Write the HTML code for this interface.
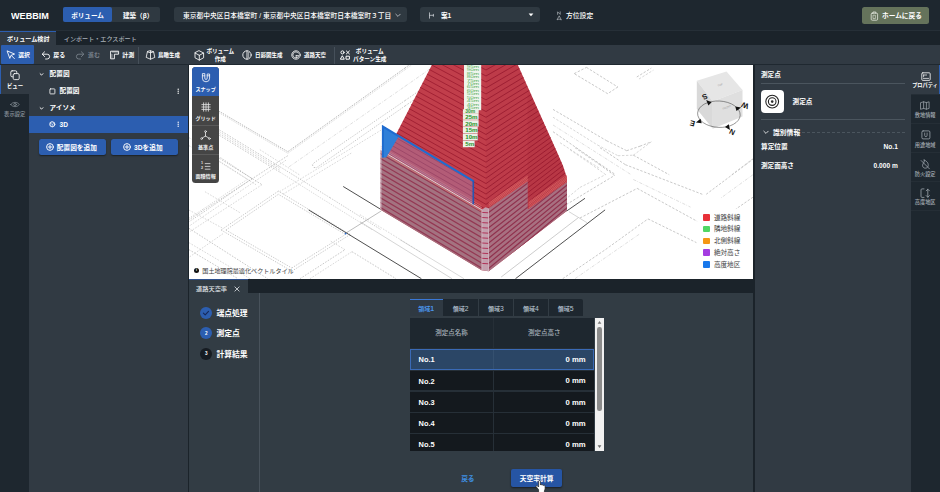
<!DOCTYPE html>
<html lang="ja">
<head>
<meta charset="utf-8">
<title>WEBBIM</title>
<style>
*{box-sizing:border-box;margin:0;padding:0}
html,body{width:940px;height:492px;overflow:hidden;background:#313a43;font-family:"Liberation Sans","Noto Sans CJK JP",sans-serif;color:#fff;font-size:7px}
.abs{position:absolute}
#app{position:relative;width:940px;height:492px;overflow:hidden}
.t{position:absolute;white-space:nowrap;font-weight:700}
.r{position:absolute}
</style>
</head>
<body>
<div id="app">
<div class="r" style="left:0;top:0;width:940px;height:31px;background:#1e272f"></div>
<div class="r" style="left:0;top:30px;width:940px;height:1px;background:#262f37"></div>
<div class="t" style="left:11.3px;top:8.6px;font-size:9.8px;line-height:14px;transform:scaleX(.93);transform-origin:0 0">WEBBIM</div>
<div class="r" style="left:62.5px;top:7px;width:97.5px;height:14.7px;border-radius:2px;background:#2f3941"></div>
<div class="r" style="left:62.5px;top:7px;width:49.2px;height:14.7px;border-radius:2px;background:#2c5eb0"></div>
<div class="t" style="left:71.2px;top:10.75px;font-size:6.6px;line-height:9.899999999999999px;font-weight:700;color:#fff;">ボリューム</div>
<div class="t" style="left:122.9px;top:10.75px;font-size:6.6px;line-height:9.899999999999999px;font-weight:700;color:#fff;">建築（β）</div>
<div class="r" style="left:174px;top:7px;width:232.5px;height:14.7px;border-radius:3px;background:#2f3941"></div>
<div class="t" style="left:183px;top:10.64px;font-size:6.75px;line-height:10.125px;font-weight:500;color:#fff;">東京都中央区日本橋室町 / 東京都中央区日本橋室町日本橋室町３丁目</div>
<svg class="abs" style="left:394.5px;top:12.5px;" width="6" height="5" viewBox="0 0 6 5" fill="none" stroke="#fff" stroke-width="1" stroke-linecap="round" stroke-linejoin="round"><path d="M0.8 1.2 L3 3.4 L5.2 1.2" stroke="#c9ced3" stroke-width="0.8"/></svg>
<div class="r" style="left:420px;top:7px;width:119.5px;height:14.7px;border-radius:3px;background:#2f3941"></div>
<svg class="abs" style="left:428px;top:11.5px;" width="7" height="7" viewBox="0 0 7 7" fill="none" stroke="#fff" stroke-width="1" stroke-linecap="round" stroke-linejoin="round"><path d="M1.5 0.8 V6.2 M1.5 3.3 H5.4 M5.4 2.3 V4.3" stroke="#c9ced3" stroke-width="0.8"/></svg>
<div class="t" style="left:441px;top:10.75px;font-size:6.6px;line-height:9.899999999999999px;font-weight:700;color:#fff;">案1</div>
<svg class="abs" style="left:527.5px;top:13px;" width="6" height="4" viewBox="0 0 6 4" fill="none" stroke="#fff" stroke-width="1" stroke-linecap="round" stroke-linejoin="round"><path d="M0.6 0.6 L5.4 0.6 L3 3.2 Z" fill="#fff" stroke="none"/></svg>
<svg class="abs" style="left:555.5px;top:10.5px;" width="6" height="10" viewBox="0 0 6 10" fill="none" stroke="#fff" stroke-width="1" stroke-linecap="round" stroke-linejoin="round"><path d="M1.6 3.4 V0.8 L4.2 3.4 V0.8" stroke="#c9ced3" stroke-width="0.6"/><path d="M3 5.2 L1 8.8 L3 8 L5 8.8 Z" stroke="#c9ced3" stroke-width="0.6"/></svg>
<div class="t" style="left:566px;top:10.60px;font-size:6.8px;line-height:10.2px;font-weight:500;color:#fff;">方位設定</div>
<div class="r" style="left:862px;top:7px;width:67px;height:16.5px;border-radius:2.5px;background:#65735b"></div>
<svg class="abs" style="left:870px;top:10.5px;" width="9" height="10" viewBox="0 0 9 10" fill="none" stroke="#fff" stroke-width="1" stroke-linecap="round" stroke-linejoin="round"><rect x="1.2" y="2.2" width="6.4" height="7" rx="1" stroke="#e6eadf" stroke-width="0.8"/><path d="M3 2.2 V1 H5.8 V2.2" stroke="#e6eadf" stroke-width="0.8"/><path d="M3.4 4.2 H5.4 V7.6 H3.4 Z" stroke="#e6eadf" stroke-width="0.6"/></svg>
<div class="t" style="left:882px;top:10.58px;font-size:6.7px;line-height:10.05px;font-weight:700;color:#fff;">ホームに戻る</div>
<div class="r" style="left:0;top:31px;width:940px;height:14px;background:#1b232a"></div>
<div class="r" style="left:0;top:31px;width:56px;height:14px;background:#313a43;border-top:1px solid #2c5eb0"></div>
<div class="t" style="left:7px;top:34.42px;font-size:6.1px;line-height:9.149999999999999px;font-weight:700;color:#fff;">ボリューム検討</div>
<div class="t" style="left:63.8px;top:34.42px;font-size:6.1px;line-height:9.149999999999999px;font-weight:500;color:#aab2b9;">インポート・エクスポート</div>
<div class="r" style="left:0;top:45px;width:940px;height:20px;background:#313a43"></div>
<div class="r" style="left:0;top:63.9px;width:940px;height:1.4px;background:#1f2830"></div>
<div class="r" style="left:0.8px;top:45.2px;width:33.6px;height:19.2px;border-radius:1px;background:#2c5eb0"></div>
<div class="r" style="left:138px;top:46.5px;width:1px;height:17px;background:#46505a"></div>
<div class="r" style="left:334px;top:46.5px;width:1px;height:17px;background:#46505a"></div>
<svg class="abs" style="left:5.5px;top:50px;" width="10" height="10" viewBox="0 0 10 10" fill="none" stroke="#fff" stroke-width="1" stroke-linecap="round" stroke-linejoin="round"><path d="M1.2 1.2 L3.8 8.4 L5 5.4 L8.2 4.2 Z" stroke-width="0.9"/><path d="M5.6 5.8 L8.4 8.6" stroke-width="0.9"/></svg>
<div class="t" style="left:18.2px;top:51.15px;font-size:5.8px;line-height:8.7px;font-weight:700;color:#fff;">選択</div>
<svg class="abs" style="left:40.5px;top:50px;" width="10" height="10" viewBox="0 0 10 10" fill="none" stroke="#fff" stroke-width="1" stroke-linecap="round" stroke-linejoin="round"><path d="M3.6 1.8 L1.2 4.2 L3.6 6.6" stroke-width="0.9"/><path d="M1.4 4.2 H6.2 A2.4 2.4 0 0 1 6.2 9 H4.6" stroke-width="0.9"/></svg>
<div class="t" style="left:53.2px;top:51.00px;font-size:6px;line-height:9.0px;font-weight:700;color:#fff;">戻る</div>
<svg class="abs" style="left:75px;top:50px;" width="10" height="10" viewBox="0 0 10 10" fill="none" stroke="#fff" stroke-width="1" stroke-linecap="round" stroke-linejoin="round"><path d="M6.4 1.8 L8.8 4.2 L6.4 6.6" stroke-width="0.9" stroke="#78818a"/><path d="M8.6 4.2 H3.8 A2.4 2.4 0 0 0 3.8 9 H5.4" stroke-width="0.9" stroke="#78818a"/></svg>
<div class="t" style="left:88px;top:51.00px;font-size:6px;line-height:9.0px;font-weight:700;color:#78818a;">進む</div>
<svg class="abs" style="left:109.5px;top:50px;" width="10" height="10" viewBox="0 0 10 10" fill="none" stroke="#fff" stroke-width="1" stroke-linecap="round" stroke-linejoin="round"><path d="M1 1.2 H8.6 V4.2 H4.4 V8.8 H1 Z" stroke-width="0.9"/><path d="M3 1.4 V2.6 M5 1.4 V2.6 M7 1.4 V2.6 M1.2 5 H2.4 M1.2 7 H2.4" stroke-width="0.6"/></svg>
<div class="t" style="left:122.2px;top:51.00px;font-size:6px;line-height:9.0px;font-weight:700;color:#fff;">計測</div>
<svg class="abs" style="left:144.5px;top:50px;" width="11" height="10" viewBox="0 0 11 10" fill="none" stroke="#fff" stroke-width="1" stroke-linecap="round" stroke-linejoin="round"><path d="M5.5 0.8 L8.6 1.8 L9.8 7.4 L5.5 9.2 L1.2 7.4 L2.4 1.8 Z M5.5 0.8 V9.2 M2.4 1.8 L5.5 2.8 L8.6 1.8" stroke-width="0.8"/></svg>
<div class="t" style="left:158px;top:51.38px;font-size:5.5px;line-height:8.25px;font-weight:700;color:#fff;">鳥瞰生成</div>
<svg class="abs" style="left:193.5px;top:50px;" width="11" height="11" viewBox="0 0 11 11" fill="none" stroke="#fff" stroke-width="1" stroke-linecap="round" stroke-linejoin="round"><path d="M5.3 0.8 L9.6 3 V7.8 L5.3 10.1 L1 7.8 V3 Z M1 3 L5.3 5.3 L9.6 3 M5.3 5.3 V10.1" stroke-width="0.85"/></svg>
<div class="t" style="left:220.3px;transform:translateX(-50%);top:47.40px;font-size:5.6px;line-height:8.399999999999999px;font-weight:700;color:#fff;">ボリューム</div>
<div class="t" style="left:220.3px;transform:translateX(-50%);top:55.00px;font-size:5.6px;line-height:8.399999999999999px;font-weight:700;color:#fff;">作成</div>
<svg class="abs" style="left:242.3px;top:50.2px;" width="10" height="10" viewBox="0 0 10 10" fill="none" stroke="#fff" stroke-width="1" stroke-linecap="round" stroke-linejoin="round"><circle cx="5" cy="5" r="4.2" stroke-width="0.85"/><path d="M5 0.8 V9.2" stroke-width="0.85"/><path d="M6.6 2.6 V3.4 M6.6 4.6 V5.4 M6.6 6.6 V7.4" stroke-width="0.7"/></svg>
<div class="t" style="left:255px;top:51.38px;font-size:5.5px;line-height:8.25px;font-weight:700;color:#fff;">日影図生成</div>
<svg class="abs" style="left:291px;top:50.2px;" width="10" height="10" viewBox="0 0 10 10" fill="none" stroke="#fff" stroke-width="1" stroke-linecap="round" stroke-linejoin="round"><circle cx="5" cy="5" r="4.2" stroke-width="0.85"/><path d="M7.4 3.2 A3 3 0 1 0 7.8 5.6 H5.2 M5.2 5.6 V8" stroke-width="0.75"/></svg>
<div class="t" style="left:304px;top:51.38px;font-size:5.5px;line-height:8.25px;font-weight:700;color:#fff;">道路天空</div>
<svg class="abs" style="left:340.3px;top:50.4px;" width="11" height="10.5" viewBox="0 0 11 10.5" fill="none" stroke="#fff" stroke-width="1" stroke-linecap="round" stroke-linejoin="round"><circle cx="2.5" cy="2.4" r="1.55" stroke-width="1"/><path d="M6.4 1 L9.4 3.9 M9.4 1 L6.4 3.9" stroke-width="1"/><path d="M2.5 6.1 L4.3 9.2 H0.7 Z" stroke-width="1"/><rect x="6.4" y="6.2" width="3" height="3" stroke-width="1"/></svg>
<div class="t" style="left:369.7px;transform:translateX(-50%);top:47.40px;font-size:5.6px;line-height:8.399999999999999px;font-weight:700;color:#fff;">ボリューム</div>
<div class="t" style="left:369.7px;transform:translateX(-50%);top:55.00px;font-size:5.6px;line-height:8.399999999999999px;font-weight:700;color:#fff;">パターン生成</div>
<div class="r" style="left:0;top:65px;width:28.5px;height:427px;background:#1e272f"></div>
<div class="r" style="left:0;top:65px;width:28.5px;height:29px;background:#313a43;border-left:1.6px solid #2c5eb0"></div>
<svg class="abs" style="left:10px;top:70px;" width="10" height="11" viewBox="0 0 10 11" fill="none" stroke="#fff" stroke-width="1" stroke-linecap="round" stroke-linejoin="round"><rect x="0.8" y="0.8" width="6" height="6" rx="1.3" stroke-width="0.85"/><rect x="3.2" y="3.6" width="6" height="6" rx="1.3" stroke-width="0.85" fill="#313a43"/></svg>
<div class="t" style="left:15px;transform:translateX(-50%);top:81.85px;font-size:5.4px;line-height:8.100000000000001px;font-weight:700;color:#fff;">ビュー</div>
<svg class="abs" style="left:10px;top:101.3px;" width="10" height="7" viewBox="0 0 10 7" fill="none" stroke="#fff" stroke-width="1" stroke-linecap="round" stroke-linejoin="round"><path d="M0.8 3.5 C2.4 0.6 7.6 0.6 9.2 3.5 C7.6 6.4 2.4 6.4 0.8 3.5 Z" stroke="#8a939b" stroke-width="0.7"/><circle cx="5" cy="3.5" r="1.3" stroke="#8a939b" stroke-width="0.7"/></svg>
<div class="t" style="left:14.7px;transform:translateX(-50%);top:111.12px;font-size:5.3px;line-height:7.949999999999999px;font-weight:500;color:#8a939b;">表示設定</div>
<div class="r" style="left:28.5px;top:65px;width:160.5px;height:427px;background:#313a43"></div>
<svg class="abs" style="left:38.8px;top:71.5px;" width="5" height="5" viewBox="0 0 5 5" fill="none" stroke="#fff" stroke-width="1" stroke-linecap="round" stroke-linejoin="round"><path d="M1.1 1.7 L2.5 3.1 L3.9 1.7" stroke-width="0.95"/></svg>
<div class="t" style="left:49.6px;top:69.07px;font-size:6.7px;line-height:10.05px;font-weight:700;color:#fff;">配置図</div>
<svg class="abs" style="left:48.5px;top:87.5px;" width="7" height="7" viewBox="0 0 7 7" fill="none" stroke="#fff" stroke-width="1" stroke-linecap="round" stroke-linejoin="round"><rect x="0.9" y="0.9" width="5" height="5" rx="0.6" stroke-width="0.8"/></svg>
<div class="t" style="left:59.5px;top:86.07px;font-size:6.7px;line-height:10.05px;font-weight:700;color:#fff;">配置図</div>
<svg class="abs" style="left:38.8px;top:105.5px;" width="5" height="5" viewBox="0 0 5 5" fill="none" stroke="#fff" stroke-width="1" stroke-linecap="round" stroke-linejoin="round"><path d="M1.1 1.7 L2.5 3.1 L3.9 1.7" stroke-width="0.95"/></svg>
<div class="t" style="left:49.6px;top:103.15px;font-size:6.6px;line-height:9.899999999999999px;font-weight:700;color:#fff;">アイソメ</div>
<div class="r" style="left:28.5px;top:116px;width:160.5px;height:16.6px;background:#2c5eb0"></div>
<svg class="abs" style="left:48.6px;top:121.3px;" width="7" height="7" viewBox="0 0 7 7" fill="none" stroke="#fff" stroke-width="1" stroke-linecap="round" stroke-linejoin="round"><circle cx="3.3" cy="3.3" r="2.6" stroke-width="0.7"/><path d="M3.3 0.9 L5.4 2.1 V4.5 L3.3 5.7 L1.2 4.5 V2.1 Z M1.2 2.1 L3.3 3.3 L5.4 2.1 M3.3 3.3 V5.7" stroke-width="0.5"/></svg>
<div class="t" style="left:59.6px;top:119.95px;font-size:6.6px;line-height:9.899999999999999px;font-weight:700;color:#fff;">3D</div>
<div class="r" style="left:39px;top:139.2px;width:67px;height:16.2px;background:#2c5eb0;border-radius:2.5px;box-shadow:0 1px 1.5px rgba(0,0,0,.45)"></div>
<svg class="abs" style="left:45.7px;top:143.3px;" width="8" height="8" viewBox="0 0 8 8" fill="none" stroke="#fff" stroke-width="1" stroke-linecap="round" stroke-linejoin="round"><circle cx="4" cy="4" r="3.4" stroke-width="0.95"/><path d="M4 2.2 V5.8 M2.2 4 H5.8" stroke-width="0.95"/></svg>
<div class="t" style="left:56.8px;top:143.18px;font-size:6.7px;line-height:10.05px;font-weight:700;color:#fff;">配置図を追加</div>
<div class="r" style="left:111px;top:139.2px;width:67px;height:16.2px;background:#2c5eb0;border-radius:2.5px;box-shadow:0 1px 1.5px rgba(0,0,0,.45)"></div>
<svg class="abs" style="left:122.9px;top:143.3px;" width="8" height="8" viewBox="0 0 8 8" fill="none" stroke="#fff" stroke-width="1" stroke-linecap="round" stroke-linejoin="round"><circle cx="4" cy="4" r="3.4" stroke-width="0.95"/><path d="M4 2.2 V5.8 M2.2 4 H5.8" stroke-width="0.95"/></svg>
<div class="t" style="left:134px;top:143.18px;font-size:6.7px;line-height:10.05px;font-weight:700;color:#fff;">3Dを追加</div>
<svg class="abs" style="left:177.3px;top:87.6px;" width="2.4" height="6.4" viewBox="0 0 2.4 6.4" fill="none" stroke="#fff" stroke-width="1" stroke-linecap="round" stroke-linejoin="round"><circle cx="1.2" cy="1.2" r="0.7" fill="#fff" stroke="none"/><circle cx="1.2" cy="3.2" r="0.7" fill="#fff" stroke="none"/><circle cx="1.2" cy="5.2" r="0.7" fill="#fff" stroke="none"/></svg>
<svg class="abs" style="left:177.3px;top:121.2px;" width="2.4" height="6.4" viewBox="0 0 2.4 6.4" fill="none" stroke="#fff" stroke-width="1" stroke-linecap="round" stroke-linejoin="round"><circle cx="1.2" cy="1.2" r="0.7" fill="#fff" stroke="none"/><circle cx="1.2" cy="3.2" r="0.7" fill="#fff" stroke="none"/><circle cx="1.2" cy="5.2" r="0.7" fill="#fff" stroke="none"/></svg>
<div class="r" style="left:189px;top:65.3px;width:564.2px;height:213.8px;background:#fff"></div>
<svg class="abs" style="left:189px;top:65.3px" width="564.2" height="213.8" viewBox="189 65.3 564.2 213.8" font-family="'Liberation Sans','Noto Sans CJK JP',sans-serif"><line x1="219.3" y1="111.7" x2="287.8" y2="152" stroke="#8c8c8c" stroke-width="0.7" stroke-dasharray="1.1 1.1"/><line x1="287.8" y1="152" x2="405" y2="68.3" stroke="#8c8c8c" stroke-width="0.7" stroke-dasharray="1.1 1.1"/><line x1="405" y1="68.3" x2="410" y2="64.7" stroke="#8c8c8c" stroke-width="0.7" stroke-dasharray="1.1 1.1"/><line x1="219.3" y1="113.2" x2="287.8" y2="153.6" stroke="#bebebe" stroke-width="0.6" stroke-dasharray="1.1 1.1"/><line x1="287.8" y1="153.6" x2="405" y2="70" stroke="#bebebe" stroke-width="0.6" stroke-dasharray="1.1 1.1"/><line x1="405" y1="70" x2="412" y2="65" stroke="#bebebe" stroke-width="0.6" stroke-dasharray="1.1 1.1"/><line x1="288.9" y1="167.2" x2="405" y2="86.7" stroke="#bebebe" stroke-width="0.5" stroke-dasharray="3.2 1.4 0.8 1.4"/><line x1="405" y1="86.7" x2="436" y2="65" stroke="#bebebe" stroke-width="0.5" stroke-dasharray="3.2 1.4 0.8 1.4"/><line x1="405" y1="100.9" x2="314.5" y2="162.8" stroke="#a2a2a2" stroke-width="0.6" stroke-dasharray="1.3 1.3"/><line x1="314.5" y1="162.8" x2="312.3" y2="165.2" stroke="#a2a2a2" stroke-width="0.6" stroke-dasharray="1.3 1.3"/><line x1="312.3" y1="165.2" x2="314" y2="167.8" stroke="#a2a2a2" stroke-width="0.6" stroke-dasharray="1.3 1.3"/><line x1="314" y1="167.8" x2="316.5" y2="168" stroke="#a2a2a2" stroke-width="0.6" stroke-dasharray="1.3 1.3"/><line x1="316.5" y1="168" x2="405" y2="106.3" stroke="#a2a2a2" stroke-width="0.6" stroke-dasharray="1.3 1.3"/><line x1="405" y1="100.9" x2="420" y2="90.5" stroke="#a2a2a2" stroke-width="0.6" stroke-dasharray="1.6 1.4"/><line x1="405" y1="106.3" x2="415" y2="99.4" stroke="#a2a2a2" stroke-width="0.6" stroke-dasharray="1.6 1.4"/><line x1="219.3" y1="130.2" x2="280.2" y2="167.2" stroke="#a2a2a2" stroke-width="0.6" stroke-dasharray="1.6 1.4"/><line x1="219.3" y1="132.0" x2="280.2" y2="169.0" stroke="#bebebe" stroke-width="0.6" stroke-dasharray="1.6 1.4"/><line x1="219.3" y1="133.79999999999998" x2="280.2" y2="170.79999999999998" stroke="#bebebe" stroke-width="0.6" stroke-dasharray="1.6 1.4"/><line x1="219.3" y1="135.6" x2="280.2" y2="172.6" stroke="#a2a2a2" stroke-width="0.6" stroke-dasharray="1.6 1.4"/><line x1="219.3" y1="158.5" x2="262" y2="185" stroke="#a2a2a2" stroke-width="0.6" stroke-dasharray="1.6 1.4"/><line x1="219.3" y1="162" x2="256" y2="185" stroke="#bebebe" stroke-width="0.6" stroke-dasharray="1.6 1.4"/><line x1="280.2" y1="167.2" x2="330" y2="198" stroke="#a2a2a2" stroke-width="0.6" stroke-dasharray="1.3 1.3"/><line x1="330" y1="198" x2="381" y2="230" stroke="#a2a2a2" stroke-width="0.6" stroke-dasharray="1.3 1.3"/><line x1="280.2" y1="172.6" x2="322" y2="199" stroke="#bebebe" stroke-width="0.6" stroke-dasharray="1.3 1.3"/><line x1="322" y1="199" x2="372" y2="230" stroke="#bebebe" stroke-width="0.6" stroke-dasharray="1.3 1.3"/><line x1="287.8" y1="156" x2="189" y2="220" stroke="#a2a2a2" stroke-width="0.6" stroke-dasharray="1.6 1.4"/><line x1="286" y1="160.5" x2="189" y2="226.5" stroke="#bebebe" stroke-width="0.6" stroke-dasharray="1.6 1.4"/><line x1="262" y1="185" x2="189" y2="232.5" stroke="#bebebe" stroke-width="0.6" stroke-dasharray="1.6 1.4"/><line x1="278.4" y1="194.6" x2="225.9" y2="230.3" stroke="#a2a2a2" stroke-width="0.6" stroke-dasharray="1.3 1.3"/><line x1="225.9" y1="230.3" x2="291.8" y2="268.3" stroke="#a2a2a2" stroke-width="0.6" stroke-dasharray="1.3 1.3"/><line x1="291.8" y1="268.3" x2="345.4" y2="234.8" stroke="#a2a2a2" stroke-width="0.6" stroke-dasharray="1.3 1.3"/><line x1="345.4" y1="234.8" x2="278.4" y2="194.6" stroke="#a2a2a2" stroke-width="0.6" stroke-dasharray="1.3 1.3"/><line x1="278.4" y1="191.4" x2="221.1" y2="230.3" stroke="#a2a2a2" stroke-width="0.6" stroke-dasharray="1.3 1.3"/><line x1="221.1" y1="230.3" x2="291.8" y2="271.5" stroke="#a2a2a2" stroke-width="0.6" stroke-dasharray="1.3 1.3"/><line x1="291.8" y1="271.5" x2="350.2" y2="234.8" stroke="#a2a2a2" stroke-width="0.6" stroke-dasharray="1.3 1.3"/><line x1="350.2" y1="234.8" x2="278.4" y2="191.4" stroke="#a2a2a2" stroke-width="0.6" stroke-dasharray="1.3 1.3"/><line x1="189" y1="138" x2="219" y2="155" stroke="#bebebe" stroke-width="0.6" stroke-dasharray="1.6 1.4"/><line x1="189" y1="146" x2="219" y2="163" stroke="#bebebe" stroke-width="0.6" stroke-dasharray="1.6 1.4"/><line x1="189" y1="250" x2="238" y2="279" stroke="#a2a2a2" stroke-width="0.6" stroke-dasharray="1.6 1.4"/><line x1="189" y1="243" x2="250" y2="279" stroke="#bebebe" stroke-width="0.6" stroke-dasharray="1.6 1.4"/><line x1="205" y1="192" x2="240" y2="213" stroke="#bebebe" stroke-width="0.6" stroke-dasharray="1.6 1.4"/><line x1="300" y1="279" x2="345" y2="250" stroke="#a2a2a2" stroke-width="0.6" stroke-dasharray="1.6 1.4"/><line x1="310" y1="279" x2="352" y2="252" stroke="#bebebe" stroke-width="0.6" stroke-dasharray="1.6 1.4"/><line x1="352" y1="252" x2="396" y2="279" stroke="#a2a2a2" stroke-width="0.6" stroke-dasharray="1.6 1.4"/><line x1="345" y1="250" x2="330" y2="241" stroke="#bebebe" stroke-width="0.6" stroke-dasharray="1.6 1.4"/><line x1="360" y1="215" x2="420" y2="252" stroke="#bebebe" stroke-width="0.6" stroke-dasharray="1.6 1.4"/><line x1="574.2" y1="73.9" x2="586.5" y2="67.7" stroke="#a2a2a2" stroke-width="0.6" stroke-dasharray="2.4 1.6"/><line x1="586.5" y1="67.7" x2="617.8" y2="87.3" stroke="#a2a2a2" stroke-width="0.6" stroke-dasharray="2.4 1.6"/><line x1="617.8" y1="87.3" x2="607.7" y2="94" stroke="#a2a2a2" stroke-width="0.6" stroke-dasharray="2.4 1.6"/><line x1="607.7" y1="94" x2="574.2" y2="73.9" stroke="#a2a2a2" stroke-width="0.6" stroke-dasharray="2.4 1.6"/><line x1="636.8" y1="77.3" x2="651.3" y2="68.4" stroke="#a2a2a2" stroke-width="0.6" stroke-dasharray="2.4 1.6"/><line x1="639" y1="79.3" x2="653.5" y2="70.4" stroke="#bebebe" stroke-width="0.6" stroke-dasharray="2.4 1.6"/><line x1="553" y1="109.7" x2="606.6" y2="141" stroke="#a2a2a2" stroke-width="0.6" stroke-dasharray="2.4 1.6"/><line x1="606.6" y1="141" x2="626.7" y2="151" stroke="#a2a2a2" stroke-width="0.6" stroke-dasharray="2.4 1.6"/><line x1="626.7" y1="151" x2="640" y2="146.5" stroke="#a2a2a2" stroke-width="0.6" stroke-dasharray="2.4 1.6"/><line x1="640" y1="146.5" x2="651.3" y2="142.1" stroke="#a2a2a2" stroke-width="0.6" stroke-dasharray="2.4 1.6"/><line x1="553" y1="117.5" x2="597.7" y2="145.4" stroke="#bebebe" stroke-width="0.6" stroke-dasharray="2.4 1.6"/><line x1="597.7" y1="145.4" x2="618" y2="156" stroke="#bebebe" stroke-width="0.6" stroke-dasharray="2.4 1.6"/><line x1="618" y1="156" x2="633.4" y2="155.5" stroke="#bebebe" stroke-width="0.6" stroke-dasharray="2.4 1.6"/><line x1="633.4" y1="155.5" x2="651.3" y2="142.1" stroke="#bebebe" stroke-width="0.6" stroke-dasharray="2.4 1.6"/><line x1="633.4" y1="155.5" x2="669.2" y2="175" stroke="#a2a2a2" stroke-width="0.6" stroke-dasharray="2.4 1.6"/><line x1="553" y1="125.3" x2="631.2" y2="175" stroke="#bebebe" stroke-width="0.5" stroke-dasharray="3.2 1.4 0.8 1.4"/><line x1="553" y1="132" x2="615.6" y2="175" stroke="#a2a2a2" stroke-width="0.6" stroke-dasharray="2.4 1.6"/><line x1="560" y1="143" x2="600" y2="169" stroke="#bebebe" stroke-width="0.6" stroke-dasharray="2.4 1.6"/><line x1="566.4" y1="204.8" x2="580" y2="196.6" stroke="#a2a2a2" stroke-width="0.6" stroke-dasharray="2.4 1.6"/><line x1="580" y1="196.6" x2="614.5" y2="175.8" stroke="#a2a2a2" stroke-width="0.6" stroke-dasharray="2.4 1.6"/><line x1="614.5" y1="175.8" x2="599.7" y2="165" stroke="#a2a2a2" stroke-width="0.6" stroke-dasharray="2.4 1.6"/><line x1="599.7" y1="165" x2="575" y2="148" stroke="#a2a2a2" stroke-width="0.6" stroke-dasharray="2.4 1.6"/><line x1="562" y1="202.5" x2="580" y2="187.7" stroke="#bebebe" stroke-width="0.6" stroke-dasharray="2.4 1.6"/><line x1="580" y1="187.7" x2="605.6" y2="174.9" stroke="#bebebe" stroke-width="0.6" stroke-dasharray="2.4 1.6"/><line x1="605.6" y1="174.9" x2="591.8" y2="165" stroke="#bebebe" stroke-width="0.6" stroke-dasharray="2.4 1.6"/><line x1="591.8" y1="165" x2="570" y2="150" stroke="#bebebe" stroke-width="0.6" stroke-dasharray="2.4 1.6"/><line x1="625.4" y1="165" x2="702.3" y2="194.6" stroke="#a2a2a2" stroke-width="0.6" stroke-dasharray="2.4 1.6"/><line x1="706.2" y1="194.6" x2="745.7" y2="165" stroke="#a2a2a2" stroke-width="0.6" stroke-dasharray="2.4 1.6"/><line x1="745.7" y1="165" x2="753" y2="159.5" stroke="#a2a2a2" stroke-width="0.6" stroke-dasharray="2.4 1.6"/><line x1="600" y1="148" x2="625.4" y2="165" stroke="#a2a2a2" stroke-width="0.6" stroke-dasharray="2.4 1.6"/><line x1="633.3" y1="179.8" x2="690.5" y2="207.4" stroke="#bebebe" stroke-width="0.5" stroke-dasharray="3.2 1.4 0.8 1.4"/><line x1="580" y1="218.3" x2="637.2" y2="188.7" stroke="#a2a2a2" stroke-width="0.6" stroke-dasharray="2.4 1.6"/><line x1="637.2" y1="188.7" x2="698.3" y2="222.2" stroke="#a2a2a2" stroke-width="0.6" stroke-dasharray="2.4 1.6"/><line x1="562.7" y1="279" x2="605.6" y2="249.8" stroke="#a2a2a2" stroke-width="0.6" stroke-dasharray="2.4 1.6"/><line x1="605.6" y1="249.8" x2="648" y2="219.2" stroke="#a2a2a2" stroke-width="0.6" stroke-dasharray="2.4 1.6"/><line x1="648" y1="219.2" x2="696.4" y2="242.9" stroke="#a2a2a2" stroke-width="0.6" stroke-dasharray="2.4 1.6"/><line x1="753" y1="197.5" x2="735.8" y2="209.4" stroke="#a2a2a2" stroke-width="0.6" stroke-dasharray="2.4 1.6"/><line x1="753" y1="175" x2="720" y2="199" stroke="#bebebe" stroke-width="0.5" stroke-dasharray="3.2 1.4 0.8 1.4"/><line x1="731.8" y1="175" x2="753" y2="158.9" stroke="#bebebe" stroke-width="0.6" stroke-dasharray="2.4 1.6"/><line x1="575" y1="279" x2="640" y2="234" stroke="#bebebe" stroke-width="0.5" stroke-dasharray="3.2 1.4 0.8 1.4"/><line x1="501.2" y1="277.3" x2="578.3" y2="218" stroke="#9a9a9a" stroke-width="0.5"/><line x1="569" y1="212" x2="587" y2="223" stroke="#aaaaaa" stroke-width="0.5"/><line x1="345.4" y1="233.7" x2="381.2" y2="211.3" stroke="#777" stroke-width="0.5"/><line x1="360" y1="222" x2="452" y2="279" stroke="#aaaaaa" stroke-width="0.5"/><line x1="400" y1="240" x2="464" y2="279" stroke="#b5b5b5" stroke-width="0.5"/><line x1="308.6" y1="210.2" x2="421.4" y2="279" stroke="#222" stroke-width="0.8"/><line x1="343.2" y1="186.8" x2="381" y2="209.8" stroke="#222" stroke-width="0.8"/><line x1="566.7" y1="211.3" x2="585" y2="198.6" stroke="#222" stroke-width="0.8"/><line x1="515.5" y1="279" x2="605.1" y2="210.2" stroke="#222" stroke-width="0.8"/><circle cx="345.6" cy="233.9" r="0.9" fill="#2a6fd6"/><line x1="220.5" y1="157.9" x2="252" y2="178.9" stroke="#a2a2a2" stroke-width="0.6" stroke-dasharray="1.3 1.3"/><line x1="252" y1="178.9" x2="204.7" y2="211.7" stroke="#a2a2a2" stroke-width="0.6" stroke-dasharray="1.3 1.3"/><line x1="204.7" y1="211.7" x2="189" y2="222" stroke="#a2a2a2" stroke-width="0.6" stroke-dasharray="1.3 1.3"/><line x1="219.5" y1="161.5" x2="247.5" y2="179.5" stroke="#bebebe" stroke-width="0.6" stroke-dasharray="1.3 1.3"/><line x1="247.5" y1="179.5" x2="203" y2="209.5" stroke="#bebebe" stroke-width="0.6" stroke-dasharray="1.3 1.3"/><line x1="203" y1="209.5" x2="189" y2="218.5" stroke="#bebebe" stroke-width="0.6" stroke-dasharray="1.3 1.3"/><line x1="189" y1="210.4" x2="223" y2="228.7" stroke="#bebebe" stroke-width="0.6" stroke-dasharray="1.6 1.4"/><line x1="189" y1="228.7" x2="267.7" y2="279" stroke="#a2a2a2" stroke-width="0.6" stroke-dasharray="1.6 1.4"/><line x1="223" y1="234" x2="189" y2="257.6" stroke="#bebebe" stroke-width="0.6" stroke-dasharray="1.6 1.4"/><line x1="279.5" y1="192" x2="349" y2="150" stroke="#bebebe" stroke-width="0.6" stroke-dasharray="1.6 1.4"/><line x1="283" y1="194.5" x2="352" y2="153" stroke="#bebebe" stroke-width="0.6" stroke-dasharray="1.6 1.4"/><line x1="259.9" y1="150" x2="300" y2="175.5" stroke="#bebebe" stroke-width="0.6" stroke-dasharray="1.6 1.4"/><line x1="349" y1="150" x2="381" y2="130.5" stroke="#bebebe" stroke-width="0.6" stroke-dasharray="1.6 1.4"/><defs><clipPath id="cUL"><polygon points="432.5,64 486.4,64 486.6,210 481.7,270.5 380.6,210 380.6,150.4 388,150.4"/></clipPath><clipPath id="cUR"><polygon points="486.0,64 517.3,64 556,150 563,166 567,178.5 567,211 488.7,271.5 481.7,270.5 486.0,210"/></clipPath><clipPath id="cBL"><polygon points="380.6,150.4 481.7,210 481.7,270.5 380.6,210"/></clipPath><clipPath id="cBR"><polygon points="488.7,208.5 527.7,181.7 527.7,209.3 528.5,209.3 567,182.5 567,211 488.7,271.5"/></clipPath><clipPath id="cT1"><polygon points="488.7,208.5 527.7,181.7 527.7,175.5 488.7,202.3"/></clipPath><clipPath id="cT2"><polygon points="528.5,209.3 567,182.5 567,175 528.5,201.8"/></clipPath><pattern id="tr" width="40" height="1.63" patternUnits="userSpaceOnUse" patternTransform="translate(486 210.2) skewY(-36.5)"><rect width="40" height="1.63" fill="#cc4650"/><rect y="0" width="40" height="0.55" fill="#e88a7c"/></pattern></defs><polygon points="432.5,64 486.4,64 486.6,210 481.7,270.5 380.6,210 380.6,150.4 388,150.4" fill="#c13e4b" stroke="none" stroke-width="0" /><g clip-path="url(#cUL)"><path d="M486.0 271.00 L370 201.59 M486.0 265.90 L370 196.71 M486.0 260.80 L370 191.82 M486.0 255.70 L370 186.94 M486.0 250.60 L370 182.05 M486.0 245.50 L370 177.17 M486.0 240.40 L370 172.29 M486.0 235.30 L370 167.40 M486.0 230.20 L370 162.52 M486.0 225.10 L370 157.64 M486.0 220.00 L370 152.75 M486.0 214.90 L370 147.87 M486.0 209.80 L370 142.98 M486.0 204.70 L370 138.10 M486.0 199.56 L370 133.18 M486.0 194.38 L370 128.22 M486.0 189.16 L370 123.22 M486.0 183.91 L370 118.19 M486.0 178.61 L370 113.12 M486.0 173.28 L370 108.01 M486.0 167.90 L370 102.86 M486.0 162.48 L370 97.68 M486.0 157.03 L370 92.45 M486.0 151.53 L370 87.19 M486.0 145.99 L370 81.88 M486.0 140.41 L370 76.54 M486.0 134.79 L370 71.16 M486.0 129.13 L370 65.73 M486.0 123.42 L370 60.27 M486.0 117.67 L370 54.76 M486.0 111.88 L370 49.21 M486.0 106.04 L370 43.63 M486.0 100.16 L370 38.00 M486.0 94.24 L370 32.32 M486.0 88.27 L370 26.61 M486.0 82.27 L370 20.86 M486.0 76.27 L370 15.12 M486.0 70.27 L370 9.37 M486.0 64.27 L370 3.63 M486.0 58.27 L370 -2.12 M486.0 52.27 L370 -7.88 M486.0 46.27 L370 -13.88 M486.0 40.27 L370 -19.88 M486.0 34.27 L370 -25.88 M486.0 28.27 L370 -31.88 M486.0 22.27 L370 -37.88 M486.0 16.27 L370 -43.88 M486.0 10.27 L370 -49.88 M486.0 4.27 L370 -55.88 M486.0 -1.73 L370 -61.88 M486.0 -7.73 L370 -67.88 M486.0 -13.73 L370 -73.88 M486.0 -19.73 L370 -79.88 M486.0 -25.73 L370 -85.88 M486.0 -31.73 L370 -91.88 M486.0 -37.73 L370 -97.88 M486.0 -43.73 L370 -103.88 M486.0 -49.73 L370 -109.88 M486.0 -55.73 L370 -115.88 M486.0 276.10 L370 206.47 M486.0 281.20 L370 211.36 M486.0 286.30 L370 216.24 M486.0 291.40 L370 221.12 M486.0 296.50 L370 226.01 M486.0 301.60 L370 231.00 M486.0 306.70 L370 236.10 M486.0 311.80 L370 241.20 M486.0 316.90 L370 246.30 M486.0 322.00 L370 251.40 M486.0 327.10 L370 256.50 M486.0 332.20 L370 261.60 M486.0 337.30 L370 266.70 M486.0 342.40 L370 271.80 M486.0 347.50 L370 276.90 M486.0 352.60 L370 282.00 M486.0 357.70 L370 287.10 M486.0 362.80 L370 292.20 M486.0 367.90 L370 297.30 M486.0 373.00 L370 302.40 M486.0 378.10 L370 307.50 M486.0 383.20 L370 312.60 M486.0 388.30 L370 317.70 M486.0 393.40 L370 322.80 M486.0 398.50 L370 327.90 M486.0 403.60 L370 333.00" stroke="#a22134" stroke-width="1.0" fill="none"/></g><polygon points="486.0,64 517.3,64 556,150 563,166 567,178.5 567,211 488.7,271.5 481.7,270.5 486.0,210" fill="#bd3b49" stroke="none" stroke-width="0" /><g clip-path="url(#cUR)"><path d="M486.0 271.00 L575 196.95 M486.0 265.90 L575 192.46 M486.0 260.80 L575 187.98 M486.0 255.70 L575 183.49 M486.0 250.60 L575 179.01 M486.0 245.50 L575 174.53 M486.0 240.40 L575 170.04 M486.0 235.30 L575 165.56 M486.0 230.20 L575 161.07 M486.0 225.10 L575 156.59 M486.0 220.00 L575 152.11 M486.0 214.90 L575 147.62 M486.0 209.80 L575 143.14 M486.0 204.70 L575 138.65 M486.0 199.56 L575 134.13 M486.0 194.38 L575 129.58 M486.0 189.16 L575 124.99 M486.0 183.91 L575 120.37 M486.0 178.61 L575 115.72 M486.0 173.28 L575 111.03 M486.0 167.90 L575 106.30 M486.0 162.48 L575 101.54 M486.0 157.03 L575 96.74 M486.0 151.53 L575 91.91 M486.0 145.99 L575 87.04 M486.0 140.41 L575 82.13 M486.0 134.79 L575 77.19 M486.0 129.13 L575 72.21 M486.0 123.42 L575 67.19 M486.0 117.67 L575 62.14 M486.0 111.88 L575 57.04 M486.0 106.04 L575 51.91 M486.0 100.16 L575 46.74 M486.0 94.24 L575 41.53 M486.0 88.27 L575 36.29 M486.0 82.27 L575 31.01 M486.0 76.27 L575 25.74 M486.0 70.27 L575 20.46 M486.0 64.27 L575 15.19 M486.0 58.27 L575 9.91 M486.0 52.27 L575 4.64 M486.0 46.27 L575 -0.64 M486.0 40.27 L575 -5.91 M486.0 34.27 L575 -11.19 M486.0 28.27 L575 -16.67 M486.0 22.27 L575 -22.67 M486.0 16.27 L575 -28.67 M486.0 10.27 L575 -34.67 M486.0 4.27 L575 -40.67 M486.0 -1.73 L575 -46.67 M486.0 -7.73 L575 -52.67 M486.0 -13.73 L575 -58.67 M486.0 -19.73 L575 -64.67 M486.0 -25.73 L575 -70.67 M486.0 -31.73 L575 -76.67 M486.0 -37.73 L575 -82.67 M486.0 -43.73 L575 -88.67 M486.0 -49.73 L575 -94.67 M486.0 -55.73 L575 -100.67 M486.0 276.10 L575 201.43 M486.0 281.20 L575 205.91 M486.0 286.30 L575 210.92 M486.0 291.40 L575 216.02 M486.0 296.50 L575 221.12 M486.0 301.60 L575 226.22 M486.0 306.70 L575 231.32 M486.0 311.80 L575 236.42 M486.0 316.90 L575 241.52 M486.0 322.00 L575 246.62 M486.0 327.10 L575 251.72 M486.0 332.20 L575 256.82 M486.0 337.30 L575 261.92 M486.0 342.40 L575 267.02 M486.0 347.50 L575 272.12 M486.0 352.60 L575 277.22 M486.0 357.70 L575 282.32 M486.0 362.80 L575 287.42 M486.0 367.90 L575 292.52 M486.0 373.00 L575 297.62 M486.0 378.10 L575 302.72 M486.0 383.20 L575 307.82 M486.0 388.30 L575 312.92 M486.0 393.40 L575 318.02 M486.0 398.50 L575 323.12 M486.0 403.60 L575 328.22" stroke="#9e1f33" stroke-width="1.0" fill="none"/></g><polygon points="527.7,88 556,150 563,166 567,178.5 567,211 527.7,241" fill="rgba(150,20,40,.10)" stroke="none" stroke-width="0" /><polygon points="488.7,208.5 527.7,181.7 527.7,175.5 488.7,202.3" fill="url(#tr)" stroke="none" stroke-width="0" opacity="0.6"/><polygon points="528.5,209.3 567,182.5 567,175 528.5,201.8" fill="url(#tr)" stroke="none" stroke-width="0" opacity="0.6"/><polygon points="380.6,150.4 481.7,210 481.7,270.5 380.6,210" fill="#a47280" stroke="none" stroke-width="0" /><g clip-path="url(#cBL)"><path d="M486.0 271.00 L370 201.59 M486.0 265.90 L370 196.71 M486.0 260.80 L370 191.82 M486.0 255.70 L370 186.94 M486.0 250.60 L370 182.05 M486.0 245.50 L370 177.17 M486.0 240.40 L370 172.29 M486.0 235.30 L370 167.40 M486.0 230.20 L370 162.52 M486.0 225.10 L370 157.64 M486.0 220.00 L370 152.75 M486.0 214.90 L370 147.87 M486.0 209.80 L370 142.98 M486.0 204.70 L370 138.10 M486.0 199.56 L370 133.18 M486.0 194.38 L370 128.22 M486.0 189.16 L370 123.22 M486.0 183.91 L370 118.19 M486.0 178.61 L370 113.12 M486.0 173.28 L370 108.01 M486.0 167.90 L370 102.86 M486.0 162.48 L370 97.68 M486.0 157.03 L370 92.45 M486.0 151.53 L370 87.19 M486.0 145.99 L370 81.88 M486.0 140.41 L370 76.54 M486.0 134.79 L370 71.16 M486.0 129.13 L370 65.73 M486.0 123.42 L370 60.27 M486.0 117.67 L370 54.76 M486.0 111.88 L370 49.21 M486.0 106.04 L370 43.63 M486.0 100.16 L370 38.00 M486.0 94.24 L370 32.32 M486.0 88.27 L370 26.61 M486.0 82.27 L370 20.86 M486.0 76.27 L370 15.12 M486.0 70.27 L370 9.37 M486.0 64.27 L370 3.63 M486.0 58.27 L370 -2.12 M486.0 52.27 L370 -7.88 M486.0 46.27 L370 -13.88 M486.0 40.27 L370 -19.88 M486.0 34.27 L370 -25.88 M486.0 28.27 L370 -31.88 M486.0 22.27 L370 -37.88 M486.0 16.27 L370 -43.88 M486.0 10.27 L370 -49.88 M486.0 4.27 L370 -55.88 M486.0 -1.73 L370 -61.88 M486.0 -7.73 L370 -67.88 M486.0 -13.73 L370 -73.88 M486.0 -19.73 L370 -79.88 M486.0 -25.73 L370 -85.88 M486.0 -31.73 L370 -91.88 M486.0 -37.73 L370 -97.88 M486.0 -43.73 L370 -103.88 M486.0 -49.73 L370 -109.88 M486.0 -55.73 L370 -115.88 M486.0 276.10 L370 206.47 M486.0 281.20 L370 211.36 M486.0 286.30 L370 216.24 M486.0 291.40 L370 221.12 M486.0 296.50 L370 226.01 M486.0 301.60 L370 231.00 M486.0 306.70 L370 236.10 M486.0 311.80 L370 241.20 M486.0 316.90 L370 246.30 M486.0 322.00 L370 251.40 M486.0 327.10 L370 256.50 M486.0 332.20 L370 261.60 M486.0 337.30 L370 266.70 M486.0 342.40 L370 271.80 M486.0 347.50 L370 276.90 M486.0 352.60 L370 282.00 M486.0 357.70 L370 287.10 M486.0 362.80 L370 292.20 M486.0 367.90 L370 297.30 M486.0 373.00 L370 302.40 M486.0 378.10 L370 307.50 M486.0 383.20 L370 312.60 M486.0 388.30 L370 317.70 M486.0 393.40 L370 322.80 M486.0 398.50 L370 327.90 M486.0 403.60 L370 333.00" stroke="#943853" stroke-width="1.2" fill="none"/></g><polygon points="488.7,208.5 527.7,181.7 527.7,209.3 528.5,209.3 567,182.5 567,211 488.7,271.5" fill="#a87081" stroke="none" stroke-width="0" /><g clip-path="url(#cBR)"><path d="M486.0 271.00 L575 196.95 M486.0 265.90 L575 192.46 M486.0 260.80 L575 187.98 M486.0 255.70 L575 183.49 M486.0 250.60 L575 179.01 M486.0 245.50 L575 174.53 M486.0 240.40 L575 170.04 M486.0 235.30 L575 165.56 M486.0 230.20 L575 161.07 M486.0 225.10 L575 156.59 M486.0 220.00 L575 152.11 M486.0 214.90 L575 147.62 M486.0 209.80 L575 143.14 M486.0 204.70 L575 138.65 M486.0 199.56 L575 134.13 M486.0 194.38 L575 129.58 M486.0 189.16 L575 124.99 M486.0 183.91 L575 120.37 M486.0 178.61 L575 115.72 M486.0 173.28 L575 111.03 M486.0 167.90 L575 106.30 M486.0 162.48 L575 101.54 M486.0 157.03 L575 96.74 M486.0 151.53 L575 91.91 M486.0 145.99 L575 87.04 M486.0 140.41 L575 82.13 M486.0 134.79 L575 77.19 M486.0 129.13 L575 72.21 M486.0 123.42 L575 67.19 M486.0 117.67 L575 62.14 M486.0 111.88 L575 57.04 M486.0 106.04 L575 51.91 M486.0 100.16 L575 46.74 M486.0 94.24 L575 41.53 M486.0 88.27 L575 36.29 M486.0 82.27 L575 31.01 M486.0 76.27 L575 25.74 M486.0 70.27 L575 20.46 M486.0 64.27 L575 15.19 M486.0 58.27 L575 9.91 M486.0 52.27 L575 4.64 M486.0 46.27 L575 -0.64 M486.0 40.27 L575 -5.91 M486.0 34.27 L575 -11.19 M486.0 28.27 L575 -16.67 M486.0 22.27 L575 -22.67 M486.0 16.27 L575 -28.67 M486.0 10.27 L575 -34.67 M486.0 4.27 L575 -40.67 M486.0 -1.73 L575 -46.67 M486.0 -7.73 L575 -52.67 M486.0 -13.73 L575 -58.67 M486.0 -19.73 L575 -64.67 M486.0 -25.73 L575 -70.67 M486.0 -31.73 L575 -76.67 M486.0 -37.73 L575 -82.67 M486.0 -43.73 L575 -88.67 M486.0 -49.73 L575 -94.67 M486.0 -55.73 L575 -100.67 M486.0 276.10 L575 201.43 M486.0 281.20 L575 205.91 M486.0 286.30 L575 210.92 M486.0 291.40 L575 216.02 M486.0 296.50 L575 221.12 M486.0 301.60 L575 226.22 M486.0 306.70 L575 231.32 M486.0 311.80 L575 236.42 M486.0 316.90 L575 241.52 M486.0 322.00 L575 246.62 M486.0 327.10 L575 251.72 M486.0 332.20 L575 256.82 M486.0 337.30 L575 261.92 M486.0 342.40 L575 267.02 M486.0 347.50 L575 272.12 M486.0 352.60 L575 277.22 M486.0 357.70 L575 282.32 M486.0 362.80 L575 287.42 M486.0 367.90 L575 292.52 M486.0 373.00 L575 297.62 M486.0 378.10 L575 302.72 M486.0 383.20 L575 307.82 M486.0 388.30 L575 312.92 M486.0 393.40 L575 318.02 M486.0 398.50 L575 323.12 M486.0 403.60 L575 328.22" stroke="#90324e" stroke-width="1.2" fill="none"/></g><polygon points="481.7,210 485.5,207.5 488.7,208.5 488.7,271.5 481.7,270.5" fill="#c5a0ae" stroke="none" stroke-width="0" /><line x1="481.7" y1="263.70" x2="488.7" y2="264.10" stroke="#b03257" stroke-width="1"/><line x1="481.7" y1="258.60" x2="488.7" y2="259.00" stroke="#b03257" stroke-width="1"/><line x1="481.7" y1="253.50" x2="488.7" y2="253.90" stroke="#b03257" stroke-width="1"/><line x1="481.7" y1="248.40" x2="488.7" y2="248.80" stroke="#b03257" stroke-width="1"/><line x1="481.7" y1="243.30" x2="488.7" y2="243.70" stroke="#b03257" stroke-width="1"/><line x1="481.7" y1="238.20" x2="488.7" y2="238.60" stroke="#b03257" stroke-width="1"/><line x1="481.7" y1="233.10" x2="488.7" y2="233.50" stroke="#b03257" stroke-width="1"/><line x1="481.7" y1="228.00" x2="488.7" y2="228.40" stroke="#b03257" stroke-width="1"/><line x1="481.7" y1="222.90" x2="488.7" y2="223.30" stroke="#b03257" stroke-width="1"/><line x1="481.7" y1="217.80" x2="488.7" y2="218.20" stroke="#b03257" stroke-width="1"/><line x1="481.7" y1="212.70" x2="488.7" y2="213.10" stroke="#b03257" stroke-width="1"/><line x1="481.9" y1="210" x2="481.9" y2="270.5" stroke="#d8d0d8" stroke-width="0.6"/><line x1="488.5" y1="209" x2="488.5" y2="271.4" stroke="#d8d0d8" stroke-width="0.6"/><line x1="380.6" y1="150.4" x2="481.7" y2="210" stroke="#e8d0d4" stroke-width="1"/><line x1="380.6" y1="152.2" x2="481.7" y2="211.8" stroke="#e8786e" stroke-width="0.6"/><line x1="380.6" y1="148.4" x2="481.7" y2="208" stroke="#e6c4cc" stroke-width="0.6" opacity="0.8"/><line x1="380.6" y1="146.6" x2="481.7" y2="206.2" stroke="#ef9a8c" stroke-width="0.5" opacity="0.7"/><line x1="380.9" y1="150" x2="380.9" y2="210" stroke="#e8e8f0" stroke-width="0.7"/><polygon points="382.7,126.6 473.5,181.3 473.5,204.6 382.7,151" fill="rgba(150,155,215,.32)" stroke="none" stroke-width="0" /><polygon points="382.7,126.6 399,136.4 386.2,157.7 382.7,157.7" fill="#2f7fd8" stroke="none" stroke-width="0" /><polyline points="382.9,157.7 382.9,126.9 473.5,181.5" fill="none" stroke="#1f6cd0" stroke-width="2" stroke-linejoin="miter"/><line x1="473.3" y1="181" x2="473.3" y2="204.6" stroke="#2a55b0" stroke-width="1.7"/><rect x="464" y="64" width="17.2" height="46.5" fill="#eef4ec"/><text x="466.8" y="68.10" font-size="2.8" font-weight="400" fill="#58b058" textLength="12.4" lengthAdjust="spacingAndGlyphs">95m</text><text x="466.8" y="71.55" font-size="2.8" font-weight="400" fill="#58b058" textLength="12.4" lengthAdjust="spacingAndGlyphs">90m</text><text x="466.8" y="75.00" font-size="2.8" font-weight="400" fill="#58b058" textLength="12.4" lengthAdjust="spacingAndGlyphs">85m</text><text x="466.8" y="78.45" font-size="2.8" font-weight="400" fill="#58b058" textLength="12.4" lengthAdjust="spacingAndGlyphs">80m</text><text x="466.8" y="81.90" font-size="2.8" font-weight="400" fill="#58b058" textLength="12.4" lengthAdjust="spacingAndGlyphs">75m</text><text x="466.8" y="85.35" font-size="2.8" font-weight="400" fill="#58b058" textLength="12.4" lengthAdjust="spacingAndGlyphs">70m</text><text x="466.8" y="88.80" font-size="2.8" font-weight="400" fill="#58b058" textLength="12.4" lengthAdjust="spacingAndGlyphs">65m</text><text x="466.8" y="92.25" font-size="2.8" font-weight="400" fill="#58b058" textLength="12.4" lengthAdjust="spacingAndGlyphs">60m</text><text x="466.8" y="95.70" font-size="2.8" font-weight="400" fill="#58b058" textLength="12.4" lengthAdjust="spacingAndGlyphs">55m</text><text x="466.8" y="99.15" font-size="2.8" font-weight="400" fill="#58b058" textLength="12.4" lengthAdjust="spacingAndGlyphs">50m</text><text x="466.8" y="102.60" font-size="2.8" font-weight="400" fill="#58b058" textLength="12.4" lengthAdjust="spacingAndGlyphs">45m</text><text x="466.8" y="106.05" font-size="2.8" font-weight="400" fill="#58b058" textLength="12.4" lengthAdjust="spacingAndGlyphs">40m</text><text x="466.8" y="109.50" font-size="2.8" font-weight="400" fill="#58b058" textLength="12.4" lengthAdjust="spacingAndGlyphs">35m</text><rect x="462.9" y="109.6" width="15.8" height="4.2" fill="#eaf1e6"/><text x="465.2" y="113.2" font-size="5" font-weight="700" fill="#3a9a3a">30m</text><rect x="462.9" y="113.60" width="15.7" height="6.5" fill="#ebf1e7"/><text x="465.2" y="119.00" font-size="6.2" font-weight="700" fill="#2c952c">25m</text><rect x="462.9" y="120.46" width="15.7" height="6.5" fill="#ebf1e7"/><text x="465.2" y="125.86" font-size="6.2" font-weight="700" fill="#2c952c">20m</text><rect x="462.9" y="127.32" width="14.8" height="6.5" fill="#ebf1e7"/><text x="465.2" y="132.72" font-size="6.2" font-weight="700" fill="#2c952c">15m</text><rect x="462.9" y="134.18" width="14.8" height="6.5" fill="#ebf1e7"/><text x="465.2" y="139.58" font-size="6.2" font-weight="700" fill="#2c952c">10m</text><rect x="462.9" y="141.04" width="11.7" height="6.5" fill="#ebf1e7"/><text x="465.2" y="146.44" font-size="6.2" font-weight="700" fill="#2c952c">5m</text><polygon points="696.8,81 726.5,71.9 742.5,90.2 712.8,101.6" fill="#e6e6e6" stroke="none" stroke-width="0" /><polygon points="696.8,81 712.8,101.6 712.8,129 696.8,109.2" fill="#d9d9d9" stroke="none" stroke-width="0" /><polygon points="712.8,101.6 742.5,90.2 742.5,116.8 712.8,129" fill="#dfdfdf" stroke="none" stroke-width="0" /><text x="718" y="87" font-size="2.6" fill="#9a9a9a" transform="rotate(-20 718 87)">TOP</text><text x="723" y="110" font-size="2.6" fill="#9a9a9a" transform="rotate(-20 723 110)">FRONT</text><ellipse cx="718.9" cy="114.5" rx="21.3" ry="13.2" fill="none" stroke="#333" stroke-width="0.5" transform="rotate(3 718.9 114.5)"/><path d="M-2.6 -2.3 L2.8 0 L-2.6 2.3 Z" fill="#111" transform="translate(708.2 102.4) rotate(225)"/><path d="M-2.6 -2.3 L2.8 0 L-2.6 2.3 Z" fill="#111" transform="translate(738.4 108.4) rotate(-15)"/><path d="M-2.6 -2.3 L2.8 0 L-2.6 2.3 Z" fill="#111" transform="translate(728.4 128) rotate(55)"/><path d="M-2.6 -2.3 L2.8 0 L-2.6 2.3 Z" fill="#111" transform="translate(698.6 122) rotate(165)"/><text x="0" y="0" font-size="7.6" font-weight="700" fill="#111" text-anchor="middle" transform="translate(703.6 94.6) rotate(155)">S</text><text x="0" y="0" font-size="7.6" font-weight="700" fill="#111" text-anchor="middle" transform="translate(745.8 103.4) rotate(200)">W</text><text x="0" y="0" font-size="7.6" font-weight="700" fill="#111" text-anchor="middle" transform="translate(733.4 129.8) rotate(205)">N</text><text x="0" y="0" font-size="7.6" font-weight="700" fill="#111" text-anchor="middle" transform="translate(693 121.2) rotate(195)">E</text></svg>
<div class="r" style="left:191.7px;top:67.3px;width:27.6px;height:115.8px;border-radius:3.5px;background:#454545;overflow:hidden"><div style="position:absolute;left:0;top:0;width:100%;height:28.4px;background:#2c5eb0"></div><div style="position:absolute;left:0;top:57.5px;width:100%;height:0.6px;background:#5a5a5a"></div><div style="position:absolute;left:0;top:86.8px;width:100%;height:0.6px;background:#5a5a5a"></div></div>
<svg class="abs" style="left:200.5px;top:72.6px;" width="10" height="10.5" viewBox="0 0 10 10.5" fill="none" stroke="#fff" stroke-width="1" stroke-linecap="round" stroke-linejoin="round"><path d="M1.4 1 V5.2 A3.6 3.6 0 0 0 8.6 5.2 V1 H6.2 V5.2 A1.2 1.2 0 0 1 3.8 5.2 V1 Z" stroke-width="0.8"/><path d="M1.4 2.8 H3.8 M6.2 2.8 H8.6" stroke-width="0.7"/></svg>
<div class="t" style="left:205.6px;transform:translateX(-50%);top:85.57px;font-size:5.1px;line-height:7.6499999999999995px;font-weight:700;color:#fff;">スナップ</div>
<svg class="abs" style="left:200.8px;top:102px;" width="10" height="10" viewBox="0 0 10 10" fill="none" stroke="#fff" stroke-width="1" stroke-linecap="round" stroke-linejoin="round"><path d="M2.6 0.8 V9.2 M5 0.8 V9.2 M7.4 0.8 V9.2 M0.8 2.6 H9.2 M0.8 5 H9.2 M0.8 7.4 H9.2" stroke-width="0.8" stroke="#e6e6e6"/></svg>
<div class="t" style="left:205.6px;transform:translateX(-50%);top:114.67px;font-size:5.1px;line-height:7.6499999999999995px;font-weight:700;color:#f0f0f0;">グリッド</div>
<svg class="abs" style="left:199.8px;top:130.3px;" width="11" height="10.5" viewBox="0 0 11 10.5" fill="none" stroke="#fff" stroke-width="1" stroke-linecap="round" stroke-linejoin="round"><circle cx="5.5" cy="1.5" r="0.9" stroke-width="0.6"/><circle cx="1.6" cy="8.6" r="0.9" stroke-width="0.6"/><circle cx="9.4" cy="8.6" r="0.9" stroke-width="0.6"/><path d="M5.5 2.4 V6 M5.5 6 L2.3 8 M5.5 6 L8.7 8" stroke-width="0.7"/></svg>
<div class="t" style="left:205.6px;transform:translateX(-50%);top:143.58px;font-size:5.1px;line-height:7.6499999999999995px;font-weight:700;color:#f0f0f0;">基準点</div>
<svg class="abs" style="left:200.6px;top:161.8px;" width="10" height="9" viewBox="0 0 10 9" fill="none" stroke="#fff" stroke-width="1" stroke-linecap="round" stroke-linejoin="round"><path d="M4.2 1.6 H9 M4.2 4.4 H9 M4.2 7.2 H9" stroke-width="0.8" stroke="#e6e6e6"/></svg><div class="t" style="left:202px;transform:translateX(-50%);top:160.90px;font-size:3.6px;line-height:5.4px;font-weight:700;color:#e6e6e6;">1</div><div class="t" style="left:202px;transform:translateX(-50%);top:165.90px;font-size:3.6px;line-height:5.4px;font-weight:700;color:#e6e6e6;">2</div>
<div class="t" style="left:205.6px;transform:translateX(-50%);top:173.48px;font-size:5.1px;line-height:7.6499999999999995px;font-weight:700;color:#f0f0f0;">面積情報</div>
<div class="r" style="left:193.8px;top:267.8px;width:5.6px;height:5.6px;border-radius:50%;background:#111"></div>
<div class="t" style="left:196.6px;transform:translateX(-50%);top:268.20px;font-size:3.6px;line-height:5.4px;font-weight:700;color:#fff;">i</div>
<div class="t" style="left:202.3px;top:266.33px;font-size:6.1px;line-height:9.149999999999999px;font-weight:400;color:#3c3c3c;">国土地理院最適化ベクトルタイル</div>
<div class="r" style="left:697px;top:209px;width:52px;height:62px;background:rgba(255,255,255,.9)"></div>
<div class="r" style="left:702.5px;top:214.00px;width:7.3px;height:6.6px;border-radius:1px;background:#e83038"></div>
<div class="t" style="left:713.9px;top:212.65px;font-size:6.6px;line-height:9.899999999999999px;font-weight:400;color:#3c3c3c;">道路斜線</div>
<div class="r" style="left:702.5px;top:225.75px;width:7.3px;height:6.6px;border-radius:1px;background:#50d764"></div>
<div class="t" style="left:713.9px;top:224.40px;font-size:6.6px;line-height:9.899999999999999px;font-weight:400;color:#3c3c3c;">隣地斜線</div>
<div class="r" style="left:702.5px;top:237.50px;width:7.3px;height:6.6px;border-radius:1px;background:#f59614"></div>
<div class="t" style="left:713.9px;top:236.15px;font-size:6.6px;line-height:9.899999999999999px;font-weight:400;color:#3c3c3c;">北側斜線</div>
<div class="r" style="left:702.5px;top:249.25px;width:7.3px;height:6.6px;border-radius:1px;background:#a53ce1"></div>
<div class="t" style="left:713.9px;top:247.90px;font-size:6.6px;line-height:9.899999999999999px;font-weight:400;color:#3c3c3c;">絶対高さ</div>
<div class="r" style="left:702.5px;top:261.00px;width:7.3px;height:6.6px;border-radius:1px;background:#1978eb"></div>
<div class="t" style="left:713.9px;top:259.65px;font-size:6.6px;line-height:9.899999999999999px;font-weight:400;color:#3c3c3c;">高度地区</div>
<div class="r" style="left:754.5px;top:65px;width:157px;height:427px;background:#313a43"></div>
<div class="t" style="left:761px;top:70.05px;font-size:6.6px;line-height:9.899999999999999px;font-weight:700;color:#fff;">測定点</div>
<div class="r" style="left:761px;top:83px;width:144px;height:1px;background:#4b555e"></div>
<div class="r" style="left:761px;top:90px;width:22.5px;height:23px;background:#fff;border-radius:4px"></div>
<svg class="abs" style="left:761px;top:90px;" width="22.5" height="23" viewBox="0 0 22.5 23" fill="none" stroke="#fff" stroke-width="1" stroke-linecap="round" stroke-linejoin="round"><circle cx="11.2" cy="11.6" r="6.4" stroke="#222" stroke-width="1.1"/><circle cx="11.2" cy="11.6" r="3.8" stroke="#222" stroke-width="1.1"/><circle cx="11.2" cy="11.6" r="1.3" fill="#2b2b2b" stroke="none"/></svg>
<div class="t" style="left:792.6px;top:97.05px;font-size:6.6px;line-height:9.899999999999999px;font-weight:700;color:#fff;">測定点</div>
<div class="r" style="left:761px;top:119.3px;width:144px;height:1px;background:#4b555e"></div>
<svg class="abs" style="left:763px;top:129.7px;" width="6" height="5" viewBox="0 0 6 5" fill="none" stroke="#fff" stroke-width="1" stroke-linecap="round" stroke-linejoin="round"><path d="M0.8 1.2 L3 3.4 L5.2 1.2" stroke-width="0.8"/></svg>
<div class="t" style="left:773px;top:127.50px;font-size:6.8px;line-height:10.2px;font-weight:700;color:#fff;">識別情報</div>
<div class="r" style="left:802px;top:132px;width:103px;height:0;border-top:1px dashed #4b555e"></div>
<div class="t" style="left:761px;top:142.18px;font-size:6.7px;line-height:10.05px;font-weight:700;color:#fff;">算定位置</div>
<div class="t" style="right:42.200000000000045px;top:142.25px;font-size:6.6px;line-height:9.899999999999999px;font-weight:700;color:#fff;">No.1</div>
<div class="t" style="left:761px;top:161.15px;font-size:6.6px;line-height:9.899999999999999px;font-weight:700;color:#fff;">測定面高さ</div>
<div class="t" style="right:42.200000000000045px;top:161.15px;font-size:6.6px;line-height:9.899999999999999px;font-weight:700;color:#fff;">0.000 m</div>
<div class="r" style="left:911.4px;top:65px;width:28.6px;height:427px;background:#1e272f"></div>
<div class="r" style="left:911.4px;top:65px;width:28.6px;height:29px;background:#313a43;border-right:1.6px solid #2c5eb0"></div>
<div class="r" style="left:911.4px;top:94px;width:28.6px;height:1px;background:#252e36"></div>
<div class="r" style="left:911.4px;top:123px;width:28.6px;height:1px;background:#252e36"></div>
<div class="r" style="left:911.4px;top:152px;width:28.6px;height:1px;background:#252e36"></div>
<div class="r" style="left:911.4px;top:181px;width:28.6px;height:1px;background:#252e36"></div>
<div class="r" style="left:911.4px;top:210px;width:28.6px;height:1px;background:#252e36"></div>
<svg class="abs" style="left:920.5px;top:71.8px;" width="10" height="9.5" viewBox="0 0 10 9.5" fill="none" stroke="#fff" stroke-width="1" stroke-linecap="round" stroke-linejoin="round"><rect x="0.8" y="0.8" width="8.4" height="7.6" rx="1" stroke-width="0.8"/><path d="M2.6 3 H5.6 M2.6 3 V4.8 M2.4 6.4 H7.6" stroke-width="0.7"/></svg>
<div class="t" style="left:925px;transform:translateX(-50%);top:82.10px;font-size:5.2px;line-height:7.800000000000001px;font-weight:700;color:#fff;">プロパティ</div>
<svg class="abs" style="left:920.3px;top:100.8px;" width="10" height="9" viewBox="0 0 10 9" fill="none" stroke="#fff" stroke-width="1" stroke-linecap="round" stroke-linejoin="round"><path d="M0.9 1.6 L3.6 0.8 L6.4 1.6 L9.1 0.8 V7.4 L6.4 8.2 L3.6 7.4 L0.9 8.2 Z M3.6 0.8 V7.4 M6.4 1.6 V8.2" stroke="#a6aeb5" stroke-width="0.7"/></svg>
<div class="t" style="left:925.2px;transform:translateX(-50%);top:111.70px;font-size:5.2px;line-height:7.800000000000001px;font-weight:500;color:#a6aeb5;">敷地情報</div>
<svg class="abs" style="left:920.5px;top:130.3px;" width="10" height="10" viewBox="0 0 10 10" fill="none" stroke="#fff" stroke-width="1" stroke-linecap="round" stroke-linejoin="round"><rect x="0.9" y="0.9" width="8" height="8" rx="1.2" stroke="#a6aeb5" stroke-width="0.75"/><path d="M3.7 3 V5.4 A1.2 1.2 0 0 0 6.1 5.4 V3" stroke="#a6aeb5" stroke-width="0.7"/></svg>
<div class="t" style="left:925.2px;transform:translateX(-50%);top:141.50px;font-size:5.2px;line-height:7.800000000000001px;font-weight:500;color:#a6aeb5;">用途地域</div>
<svg class="abs" style="left:920px;top:159.3px;" width="11" height="11" viewBox="0 0 11 11" fill="none" stroke="#fff" stroke-width="1" stroke-linecap="round" stroke-linejoin="round"><path d="M4.2 1 C7.6 2.4 8.8 5 8 7.4 C7.2 9.6 3.8 9.8 2.8 7.6 C2 5.8 3.4 4.4 4 3.2 C4.4 2.4 4.4 1.8 4.2 1 Z" stroke="#a6aeb5" stroke-width="0.75"/><path d="M1.2 1.6 L9.4 9.8" stroke="#a6aeb5" stroke-width="0.75"/></svg>
<div class="t" style="left:925.2px;transform:translateX(-50%);top:170.80px;font-size:5.2px;line-height:7.800000000000001px;font-weight:500;color:#a6aeb5;">防火設定</div>
<svg class="abs" style="left:920px;top:188.1px;" width="11" height="10.5" viewBox="0 0 11 10.5" fill="none" stroke="#fff" stroke-width="1" stroke-linecap="round" stroke-linejoin="round"><path d="M4 0.9 H2 A1 1 0 0 0 1 1.9 V8.4 A1 1 0 0 0 2 9.4 H4" stroke="#a6aeb5" stroke-width="0.75"/><path d="M7.8 1.2 V9.2 M6.2 2.8 L7.8 1.2 L9.4 2.8 M6.2 7.6 L7.8 9.2 L9.4 7.6" stroke="#a6aeb5" stroke-width="0.75"/></svg>
<div class="t" style="left:925.2px;transform:translateX(-50%);top:199.40px;font-size:5.2px;line-height:7.800000000000001px;font-weight:500;color:#a6aeb5;">高度地区</div>
<div class="r" style="left:189px;top:279px;width:564.2px;height:213px;background:#323c44"></div>
<div class="r" style="left:189px;top:279px;width:564.2px;height:14.1px;background:#1b232a"></div>
<div class="r" style="left:189px;top:279px;width:58.7px;height:14.2px;background:#323c44;border-top:1.3px solid #2d4f8c"></div>
<div class="r" style="left:188.1px;top:65px;width:1px;height:427px;background:#1b232a"></div>
<div class="r" style="left:753.2px;top:65px;width:1.5px;height:427px;background:#1b232a"></div>
<div class="t" style="left:196.1px;top:284.05px;font-size:6.2px;line-height:9.3px;font-weight:500;color:#e4e8eb;">道路天空率</div>
<svg class="abs" style="left:233.5px;top:285.6px;" width="6" height="6" viewBox="0 0 6 6" fill="none" stroke="#fff" stroke-width="1" stroke-linecap="round" stroke-linejoin="round"><path d="M0.9 0.9 L5.1 5.1 M5.1 0.9 L0.9 5.1" stroke-width="0.8" stroke="#e6e9ec"/></svg>
<div class="r" style="left:259px;top:293.1px;width:1px;height:199px;background:#48525b"></div>
<div class="r" style="left:200.3px;top:306.8px;width:11.8px;height:11.8px;border-radius:50%;background:#2c5eb0"></div>
<svg class="abs" style="left:200.3px;top:306.8px;" width="11.8" height="11.8" viewBox="0 0 11.8 11.8" fill="none" stroke="#fff" stroke-width="1" stroke-linecap="round" stroke-linejoin="round"><path d="M3.4 6.1 L5.2 7.9 L8.5 4.3" stroke="#16285a" stroke-width="1.1"/></svg>
<div class="t" style="left:216.4px;top:307.75px;font-size:7.8px;line-height:11.7px;font-weight:700;color:#fff;">端点処理</div>
<div class="r" style="left:200.3px;top:327.1px;width:11.8px;height:11.8px;border-radius:50%;background:#2c5eb0"></div>
<div class="t" style="left:206.2px;transform:translateX(-50%);top:330.65px;font-size:4.6px;line-height:6.8999999999999995px;font-weight:700;color:#fff;">2</div>
<div class="t" style="left:216.4px;top:328.05px;font-size:7.8px;line-height:11.7px;font-weight:700;color:#fff;">測定点</div>
<div class="r" style="left:200.3px;top:347.8px;width:11.8px;height:11.8px;border-radius:50%;background:#161c22"></div>
<div class="t" style="left:206.2px;transform:translateX(-50%);top:351.35px;font-size:4.6px;line-height:6.8999999999999995px;font-weight:700;color:#fff;">3</div>
<div class="t" style="left:216.4px;top:348.75px;font-size:7.8px;line-height:11.7px;font-weight:700;color:#fff;">計算結果</div>
<div class="r" style="left:409.8px;top:298.6px;width:32.8px;height:17.8px;background:#2f3942;border-top:1.2px solid #3a78d6"></div>
<div class="t" style="left:426.20000000000005px;transform:translateX(-50%);top:304.10px;font-size:6px;line-height:9.0px;font-weight:700;color:#4a94ea;">領域<span style="font-size:6.8px">1</span></div>
<div class="r" style="left:443.3px;top:299px;width:34.6px;height:17.4px;background:#1e272f;"></div>
<div class="t" style="left:460.6px;transform:translateX(-50%);top:304.10px;font-size:6px;line-height:9.0px;font-weight:500;color:#b9c6d3;">領域<span style="font-size:6.8px">2</span></div>
<div class="r" style="left:478.6px;top:299px;width:34.6px;height:17.4px;background:#1e272f;"></div>
<div class="t" style="left:495.9px;transform:translateX(-50%);top:304.10px;font-size:6px;line-height:9.0px;font-weight:500;color:#b9c6d3;">領域<span style="font-size:6.8px">3</span></div>
<div class="r" style="left:513.9px;top:299px;width:34.2px;height:17.4px;background:#1e272f;"></div>
<div class="t" style="left:531.0px;transform:translateX(-50%);top:304.10px;font-size:6px;line-height:9.0px;font-weight:500;color:#b9c6d3;">領域<span style="font-size:6.8px">4</span></div>
<div class="r" style="left:548.8px;top:299px;width:33.8px;height:17.4px;background:#1e272f;border-radius:0 2px 0 0;"></div>
<div class="t" style="left:565.7px;transform:translateX(-50%);top:304.10px;font-size:6px;line-height:9.0px;font-weight:500;color:#b9c6d3;">領域<span style="font-size:6.8px">5</span></div>
<div class="r" style="left:409.8px;top:317.6px;width:184.6px;height:133.6px;background:#262f37"></div>
<div class="r" style="left:409.8px;top:318px;width:83px;height:30.2px;background:#1e272f"></div>
<div class="r" style="left:493.6px;top:318px;width:100.8px;height:30.2px;background:#1e272f"></div>
<div class="t" style="left:451.6px;transform:translateX(-50%);top:328.32px;font-size:6.5px;line-height:9.75px;font-weight:500;color:#a7b1ba;">測定点名称</div>
<div class="t" style="left:544.3px;transform:translateX(-50%);top:328.32px;font-size:6.5px;line-height:9.75px;font-weight:500;color:#a7b1ba;">測定点高さ</div>
<div class="r" style="left:409.8px;top:349px;width:184.6px;height:20.6px;background:#2b4666;border:1px solid #3a6ab6"></div>
<div class="r" style="left:493px;top:350px;width:0.8px;height:18.6px;background:#35506f"></div>
<div class="t" style="left:418.6px;top:354.25px;font-size:7.4px;line-height:11.100000000000001px;font-weight:700;color:#fff;">No.1</div>
<div class="t" style="right:354.29999999999995px;top:354.03px;font-size:7.7px;line-height:11.55px;font-weight:700;color:#fff;">0 mm</div>
<div class="r" style="left:409.8px;top:370.6px;width:83.2px;height:19.8px;background:#14191e"></div>
<div class="r" style="left:493.8px;top:370.6px;width:100.6px;height:19.8px;background:#14191e"></div>
<div class="t" style="left:418.6px;top:375.65px;font-size:7.4px;line-height:11.100000000000001px;font-weight:700;color:#fff;">No.2</div>
<div class="t" style="right:354.29999999999995px;top:375.43px;font-size:7.7px;line-height:11.55px;font-weight:700;color:#fff;">0 mm</div>
<div class="r" style="left:409.8px;top:391.7px;width:83.2px;height:20.1px;background:#14191e"></div>
<div class="r" style="left:493.8px;top:391.7px;width:100.6px;height:20.1px;background:#14191e"></div>
<div class="t" style="left:418.6px;top:397.15px;font-size:7.4px;line-height:11.100000000000001px;font-weight:700;color:#fff;">No.3</div>
<div class="t" style="right:354.29999999999995px;top:396.93px;font-size:7.7px;line-height:11.55px;font-weight:700;color:#fff;">0 mm</div>
<div class="r" style="left:409.8px;top:412.9px;width:83.2px;height:20.1px;background:#14191e"></div>
<div class="r" style="left:493.8px;top:412.9px;width:100.6px;height:20.1px;background:#14191e"></div>
<div class="t" style="left:418.6px;top:418.15px;font-size:7.4px;line-height:11.100000000000001px;font-weight:700;color:#fff;">No.4</div>
<div class="t" style="right:354.29999999999995px;top:417.93px;font-size:7.7px;line-height:11.55px;font-weight:700;color:#fff;">0 mm</div>
<div class="r" style="left:409.8px;top:434px;width:83.2px;height:17.2px;background:#14191e"></div>
<div class="r" style="left:493.8px;top:434px;width:100.6px;height:17.2px;background:#14191e"></div>
<div class="t" style="left:418.6px;top:439.35px;font-size:7.4px;line-height:11.100000000000001px;font-weight:700;color:#fff;">No.5</div>
<div class="t" style="right:354.29999999999995px;top:439.13px;font-size:7.7px;line-height:11.55px;font-weight:700;color:#fff;">0 mm</div>
<div class="r" style="left:594.6px;top:317.6px;width:9px;height:133.6px;background:#f1f1f1"></div>
<div class="r" style="left:597.2px;top:327.3px;width:4.5px;height:84px;background:#8b8b8b;border-radius:2.3px"></div>
<svg class="abs" style="left:594.6px;top:317.6px;" width="9" height="9" viewBox="0 0 9 9" fill="none" stroke="#fff" stroke-width="1" stroke-linecap="round" stroke-linejoin="round"><path d="M2.6 5.8 L4.5 3 L6.4 5.8 Z" fill="#7a7a7a" stroke="none"/></svg>
<svg class="abs" style="left:594.6px;top:442.4px;" width="9" height="9" viewBox="0 0 9 9" fill="none" stroke="#fff" stroke-width="1" stroke-linecap="round" stroke-linejoin="round"><path d="M2.6 3.2 L4.5 6 L6.4 3.2 Z" fill="#6a6a6a" stroke="none"/></svg>
<div class="t" style="left:461.2px;top:474.08px;font-size:6.7px;line-height:10.05px;font-weight:700;color:#3f8fe2;">戻る</div>
<div class="r" style="left:511.2px;top:469.3px;width:51px;height:18.2px;background:#2655a4;border-radius:2px;box-shadow:0 1px 2px rgba(0,0,0,.5)"></div>
<div class="t" style="left:519.7px;top:474.00px;font-size:6.8px;line-height:10.2px;font-weight:700;color:#fff;">天空率計算</div>
<svg class="abs" style="left:533.5px;top:478.5px;" width="13" height="14" viewBox="0 0 13 14" fill="none" stroke="#fff" stroke-width="1" stroke-linecap="round" stroke-linejoin="round"><path d="M4.6 13.6 V10.6 L2.2 7.8 C1.6 6.9 2.7 6.1 3.5 6.9 L4.6 8 V2.4 C4.6 1.2 6.4 1.2 6.4 2.4 V6 C6.4 5.2 8 5.2 8 6.2 C8.1 5.5 9.6 5.6 9.6 6.6 C9.8 6 11.1 6.1 11.1 7.1 V10 L10.4 11.8 V13.6 Z" fill="#fff" stroke="#222" stroke-width="0.7"/></svg>
</div>
</body>
</html>
